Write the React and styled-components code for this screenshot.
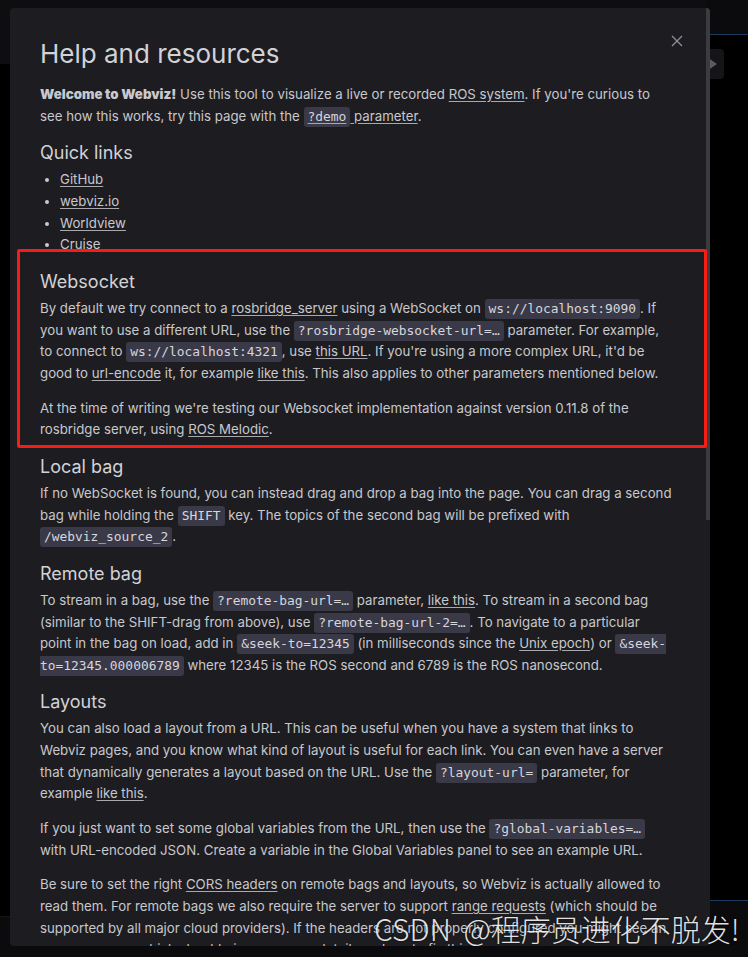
import React from 'react';
import styled, { createGlobalStyle } from 'styled-components';

const GlobalStyle = createGlobalStyle`
    html, body {
        margin: 0;
        padding: 0;
        background: #0b0b0d;
        overflow: hidden;
    }
`;

const Screen = styled.div`
    position: relative;
    width: 748px;
    height: 957px;
    overflow: hidden;
    display: flex;
    font-family: Inter, "Noto Sans", sans-serif;
`;

const Pane = styled.div`
    display: flex;
    flex-direction: column;
    width: ${props => props.width || 'auto'};
    flex: ${props => (props.width ? '0 0 auto' : '1')};
    background: #000;
`;

const PaneHeader = styled.div`
    height: ${props => props.height}px;
    background: ${props => props.bg};
    border-bottom: ${props => (props.accent ? '1px solid #1d3a5e' : 'none')};
`;

const PaneBody = styled.div`
    flex: 1;
    position: relative;
`;

const PaneFooter = styled.div`
    height: ${props => props.height}px;
    background: #0b0b0d;
    border-top: 1px solid ${props => (props.accent ? '#1d3a5e' : '#141416')};
`;

const PlayButton = styled.div`
    position: absolute;
    top: 14px;
    right: 24px;
    width: 30px;
    height: 30px;
    border-radius: 4px;
    background: #151517;
    display: flex;
    align-items: center;
    justify-content: flex-end;
    padding-right: 6px;
    box-sizing: border-box;
`;

const Modal = styled.div`
    position: absolute;
    top: 8px;
    left: 10px;
    width: 700px;
    height: 938px;
    background: #1d1d21;
    border-radius: 4px;
    overflow: hidden;
    display: flex;
`;

const Content = styled.div`
    flex: 1;
    padding: 28px 32px 0 30px;
    color: #c8c8cd;
    font-size: 13.25px;
    line-height: 21.65px;

    b {
        font-weight: 900;
    }
`;

const ScrollTrack = styled.div`
    width: 4px;
    background: #1d1d21;
`;

const ScrollThumb = styled.div`
    height: 512px;
    background: #3b3b40;
`;

const CloseButton = styled.button`
    position: absolute;
    top: 27px;
    right: 27px;
    width: 12px;
    height: 12px;
    padding: 0;
    border: none;
    background: none;
    display: flex;
`;

const Title = styled.h1`
    margin: 0 0 12px;
    font-size: 26px;
    font-weight: 400;
    line-height: 36px;
    color: #d2d2d6;
`;

const Heading = styled.h2`
    margin: 13px 0 3px;
    font-size: 18px;
    font-weight: 400;
    line-height: 26px;
    color: #d2d2d6;
`;

const Para = styled.p`
    margin: 0 0 13px;
`;

const Link = styled.a`
    color: inherit;
    text-decoration: underline;
    text-underline-offset: 2px;
    text-decoration-color: #a8a8ad;
`;

const Code = styled.code`
    font-family: "DejaVu Sans Mono", "Liberation Mono", monospace;
    font-size: 12.9px;
    line-height: 1;
    background: #3a3948;
    color: #d6d6dc;
    border-radius: 3px;
    padding: 2px 4px 3px;
`;

const LinkList = styled.ul`
    margin: 0 0 11px;
    padding-left: 20px;
`;

const Section = styled.section`
    position: relative;
`;

const Highlight = styled.div`
    position: absolute;
    top: -20px;
    bottom: -7px;
    left: -23px;
    right: -33px;
    border: 3px solid #f51d16;
    border-radius: 2px;
    pointer-events: none;
`;

const Watermark = styled.div`
    position: absolute;
    left: 374px;
    top: 908px;
    font-family: "Noto Sans CJK SC", "Noto Sans", sans-serif;
    font-size: 30px;
    font-weight: 300;
    line-height: 40px;
    word-spacing: 6px;
    color: rgba(255, 255, 255, 0.88);
    text-shadow: 0 0 2px rgba(0, 0, 0, 0.6);
    white-space: nowrap;
`;

export default function App() {
    return (
        <Screen>
            <GlobalStyle />
            <Pane width="706px">
                <PaneHeader height={64} bg="#0e0e10" />
                <PaneBody />
                <PaneFooter height={40} />
            </Pane>
            <Pane>
                <PaneHeader height={34} bg="#0b0b0d" accent />
                <PaneBody>
                    <PlayButton>
                        <svg width="12" height="16" viewBox="0 0 12 16">
                            <path d="M1 1L11 8L1 15Z" fill="#5a5a60" />
                        </svg>
                    </PlayButton>
                </PaneBody>
                <PaneFooter height={56} accent />
            </Pane>

            <Modal>
                <Content>
                    <Title>Help and resources</Title>
                    <Para>
                        <b>Welcome to Webviz!</b> Use this tool to visualize a live or recorded <Link>ROS system</Link>. If you're curious to see how this works, try this page with the <Link><Code>?demo</Code> parameter</Link>.
                    </Para>

                    <Heading>Quick links</Heading>
                    <LinkList>
                        <li><Link>GitHub</Link></li>
                        <li><Link>webviz.io</Link></li>
                        <li><Link>Worldview</Link></li>
                        <li><Link>Cruise</Link></li>
                    </LinkList>

                    <Section>
                        <Highlight />
                        <Heading>Websocket</Heading>
                        <Para>
                            By default we try connect to a <Link>rosbridge_server</Link> using a WebSocket on <Code>ws://localhost:9090</Code>. If you want to use a different URL, use the <Code>?rosbridge-websocket-url=…</Code> parameter. For example, to connect to <Code>ws://localhost:4321</Code>, use <Link>this URL</Link>. If you're using a more complex URL, it'd be good to <Link>url-encode</Link> it, for example <Link>like this</Link>. This also applies to other parameters mentioned below.
                        </Para>
                        <Para>
                            At the time of writing we're testing our Websocket implementation against version 0.11.8 of the rosbridge server, using <Link>ROS Melodic</Link>.
                        </Para>
                    </Section>

                    <Heading>Local bag</Heading>
                    <Para>
                        If no WebSocket is found, you can instead drag and drop a bag into the page. You can drag a second bag while holding the <Code>SHIFT</Code> key. The topics of the second bag will be prefixed with <Code>/webviz_source_2</Code>.
                    </Para>

                    <Heading>Remote bag</Heading>
                    <Para>
                        To stream in a bag, use the <Code>?remote-bag-url=…</Code> parameter, <Link>like this</Link>. To stream in a second bag (similar to the SHIFT-drag from above), use <Code>?remote-bag-url-2=…</Code>. To navigate to a particular point in the bag on load, add in <Code>&amp;seek-to=12345</Code> (in milliseconds since the <Link>Unix epoch</Link>) or <Code>&amp;seek-to=12345.000006789</Code> where 12345 is the ROS second and 6789 is the ROS nanosecond.
                    </Para>

                    <Heading>Layouts</Heading>
                    <Para>
                        You can also load a layout from a URL. This can be useful when you have a system that links to Webviz pages, and you know what kind of layout is useful for each link. You can even have a server that dynamically generates a layout based on the URL. Use the <Code>?layout-url=</Code> parameter, for example <Link>like this</Link>.
                    </Para>
                    <Para>
                        If you just want to set some global variables from the URL, then use the <Code>?global-variables=…</Code> with URL-encoded JSON. Create a variable in the Global Variables panel to see an example URL.
                    </Para>
                    <Para>
                        Be sure to set the right <Link>CORS headers</Link> on remote bags and layouts, so Webviz is actually allowed to read them. For remote bags we also require the server to support <Link>range requests</Link> (which should be supported by all major cloud providers). If the headers are not properly configured you might see an error message, which should give you more details on how to fix this.
                    </Para>
                </Content>
                <ScrollTrack>
                    <ScrollThumb />
                </ScrollTrack>
                <CloseButton aria-label="Close">
                    <svg width="12" height="12" viewBox="0 0 12 12">
                        <path d="M1 1L11 11M11 1L1 11" stroke="#8f8f95" strokeWidth="1.3" />
                    </svg>
                </CloseButton>
            </Modal>

            <Watermark>CSDN @程序员进化不脱发!</Watermark>
        </Screen>
    );
}
